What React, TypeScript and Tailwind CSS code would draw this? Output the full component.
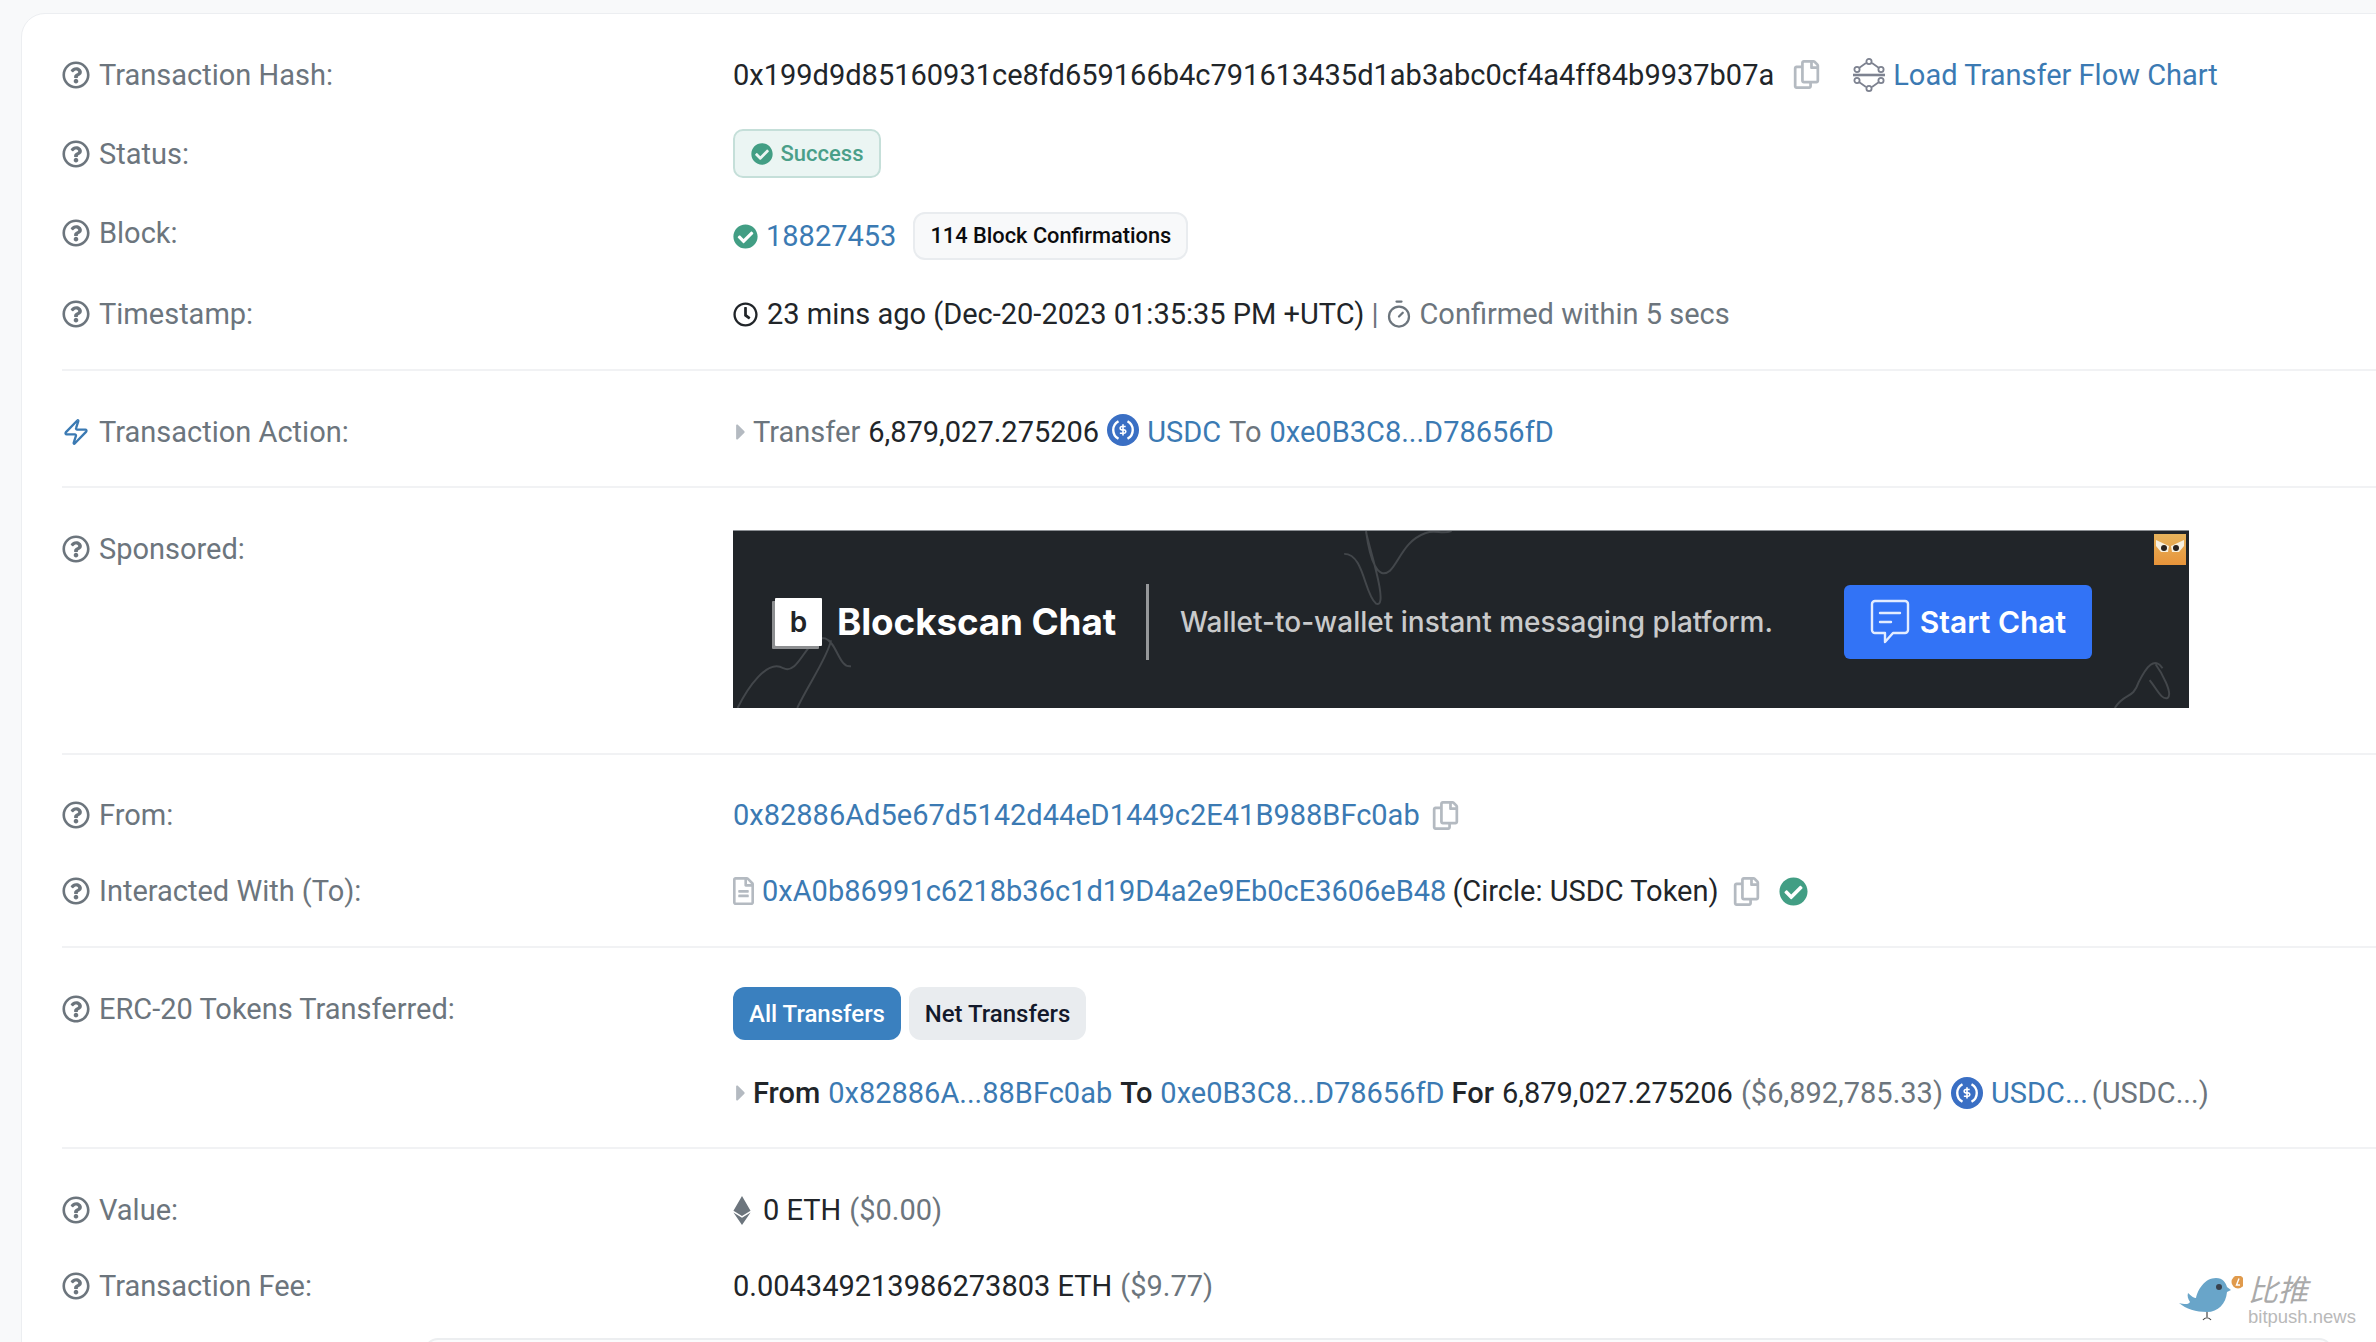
import type { ReactNode } from 'react';
import { FaCaretRight, FaCheckCircle, FaEthereum, FaRegClock, FaRegCopy, FaRegFileAlt, FaRegQuestionCircle } from 'react-icons/fa';
import { Timer, Zap } from 'lucide-react';

const Help = () => <FaRegQuestionCircle className="w-[28px] h-[28px] shrink-0 text-[#6c757d]" />;

const Copy = () => <FaRegCopy className="w-[29px] h-[29px] shrink-0 text-[#b4bac1]" />;

const A = ({ children }: { children: ReactNode }) => <span className="text-[#3b7ab3]">{children}</span>;

const Muted = ({ children }: { children: ReactNode }) => <span className="text-[#6c757d]">{children}</span>;

const Usdc = () => (
    <svg viewBox="0 0 32 32" className="w-[32px] h-[32px] shrink-0 -mt-[4px]">
        <circle cx="16" cy="16" r="16" fill="#3a6fc4" />
        <path d="M11.5 7.2a10 10 0 0 0 0 17.6M20.5 7.2a10 10 0 0 1 0 17.6" fill="none" stroke="#fff" strokeWidth="2.4" />
        <g transform="translate(10.6 10.2) scale(0.45)" fill="none" stroke="#fff" strokeWidth="3.6">
            <path d="M12 0v25" />
            <path d="M18 5H9.5a3.5 3.5 0 0 0 0 7.5h5a3.5 3.5 0 0 1 0 7.5H5" />
        </g>
    </svg>
);

const FlowIcon = () => (
    <svg viewBox="0 0 32 34" className="w-[32px] h-[34px] shrink-0" fill="none" stroke="#7d8290" strokeWidth="1.8">
        <path d="M6 10 13 5M19 5l7 5M6 24l7 5M19 29l7-5" />
        <path d="M0 17h32" strokeWidth="2.6" />
        <circle cx="16" cy="3.5" r="2.6" />
        <circle cx="4" cy="11.5" r="2.6" />
        <circle cx="28" cy="11.5" r="2.6" />
        <circle cx="4" cy="22.5" r="2.6" />
        <circle cx="28" cy="22.5" r="2.6" />
        <circle cx="16" cy="30.5" r="2.6" />
    </svg>
);

const Bird = () => (
    <svg viewBox="0 0 64 46" className="w-[64px] h-[46px]">
        <path d="M0 27c7 2 10 1 11-1-2-3-3-6-2-9 3 3 6 5 8 5 2-9 9-20 20-20 7 0 10 5 11 9l4 3-4 2c-1 12-9 20-20 20C17 36 7 33 0 27z" fill="#69a5c9" />
        <path d="M28 36v5M24 44c2-3 6-3 8 0" fill="none" stroke="#444" strokeWidth="1.2" />
        <circle cx="40" cy="11" r="3" fill="#39424e" />
        <circle cx="59" cy="6" r="6.5" fill="#e09a4c" />
        <path d="M60 2.5 57.5 9H61" fill="none" stroke="#fff" strokeWidth="1.4" />
    </svg>
);

const Banner = () => (
    <div className="relative w-[1456px] h-[178px] pt-[5px] flex items-center overflow-hidden bg-[#212529] border-t border-[#8b8f93] font-['Inter',sans-serif]">
        {/* background scribbles */}
        <svg viewBox="0 0 1455 178" className="absolute inset-0 w-full h-full" fill="none" stroke="#43474b" strokeWidth="2">
            <path d="M610 23c20 0 20 40 32 50 14 6-8-60-10-72M632 0c4 30 12 50 24 40 10-10 14-30 36-38 10-4 16 2 26-2" />
            <path d="M0 178c10-20 30-50 46-40 16 8 24-34 42-30 12 4 14 30 26 28M60 178c10-22 30-50 34-68" />
            <path d="M1385 178c10-16 18-8 24-26 8-16 16-26 24-14M1420 150c8 10 12 20 18 18 6-4-6-26-12-34" />
        </svg>

        <div className="relative ml-[42px] w-[47px] h-[48px] bg-white flex items-center justify-center rounded-[1px] shadow-[-3px_3px_0_#8d8f91]">
            <span className="text-[#212529] text-[28px] font-semibold leading-none">b</span>
        </div>
        <span className="relative ml-[15px] w-[309px] text-white text-[36.8px] font-bold leading-none tracking-[-0.1px]">Blockscan Chat</span>
        <div className="relative w-[3px] h-[76px] bg-[#96989a]" />
        <span className="relative ml-[31px] w-[664px] text-[#c9cacb] text-[28px] font-medium leading-none">Wallet-to-wallet instant messaging platform.</span>
        <button className="relative w-[248px] h-[74px] flex items-center justify-center gap-[10px] rounded-[6px] bg-[#3273f6] text-white text-[30px] font-semibold">
            <svg viewBox="0 0 40 48" className="w-[40px] h-[48px]" fill="none" stroke="#e3ecff" strokeWidth="2.4" strokeLinejoin="round">
                <path d="M5 3h30a3 3 0 0 1 3 3v26a3 3 0 0 1-3 3H23l-8 9v-9H5a3 3 0 0 1-3-3V6a3 3 0 0 1 3-3z" />
                <path d="M10 15h20M10 24h11" strokeLinecap="round" />
            </svg>
            Start Chat
        </button>
        {/* ad badge */}
        <div className="absolute top-[3px] right-[3px] w-[32px] h-[31px] bg-[linear-gradient(#e6b35c,#e8943a)] flex items-start justify-center pt-[6px]">
            <svg viewBox="0 0 28 14" className="w-[28px] h-[14px]">
                <path d="M0 0 13 6 12 12 5 12 0 6zM28 0 15 6 16 12 23 12 28 6z" fill="#f7f0df" />
                <circle cx="8" cy="8" r="3" fill="#2a2320" />
                <circle cx="20" cy="8" r="3" fill="#2a2320" />
            </svg>
        </div>
    </div>
);

const Row = ({ label, icon, height, children }: { label: string; icon?: ReactNode; height: string; children: ReactNode }) => (
    <div className={`flex items-center ${height}`}>
        <div className="w-[671px] shrink-0 flex items-center gap-[9px] text-[#6c757d]">
            {icon ?? <Help />}
            <span>{label}</span>
        </div>
        <div className="flex items-center">{children}</div>
    </div>
);

const TopRow = ({ label, className, children }: { label: string; className: string; children: ReactNode }) => (
    <div className={`flex items-start ${className}`}>
        <div className={`w-[671px] shrink-0 flex items-center gap-[9px] text-[#6c757d] ${label === 'Sponsored:' ? 'h-[38px]' : 'h-[44px]'}`}>
            <Help />
            <span>{label}</span>
        </div>
        <div>{children}</div>
    </div>
);

const Hr = () => <div className="h-[2px] bg-[#f1f2f4]" />;

export default function App() {
    return (
        <div className="relative h-[1342px] w-[2376px] overflow-hidden bg-[#f8f9fa] pt-[13px] pl-[21px] font-['Roboto',sans-serif] text-[29px] leading-[40px] text-[#212529]">
            <div className="w-[2400px] h-[1400px] rounded-tl-[24px] border border-[#eceef1] bg-white pl-[40px] pt-[21px]">
                {/* Hash, status, block, timestamp */}
                <Row label="Transaction Hash:" height="h-[79px]">
                    <span>0x199d9d85160931ce8fd659166b4c791613435d1ab3abc0cf4a4ff84b9937b07a</span>
                    <span className="ml-[18px]"><Copy /></span>
                    <span className="ml-[32px] mr-[8px]"><FlowIcon /></span>
                    <A>Load Transfer Flow Chart</A>
                </Row>
                <Row label="Status:" height="h-[79px]">
                    <div className="h-[49px] w-[148px] flex items-center justify-center gap-[8px] rounded-[10px] border-2 border-[#c5dfd9] bg-[#ebf5f3] text-[22px] font-medium text-[#4a9f89]">
                        <FaCheckCircle className="w-[22px] h-[22px] text-[#429e84]" />
                        Success
                    </div>
                </Row>
                <Row label="Block:" height="h-[80px]">
                    <div className="flex items-center mt-[6px]">
                        <FaCheckCircle className="w-[25px] h-[25px] text-[#429e84] mr-[8px]" />
                        <A>18827453</A>
                        <div className="ml-[17px] h-[48px] w-[275px] flex items-center justify-center rounded-[12px] border-2 border-[#e9ecef] bg-[#f8f9fa] text-[21.8px] font-medium text-[#0b0c0e]">
                            114 Block Confirmations
                        </div>
                    </div>
                </Row>
                <Row label="Timestamp:" height="h-[82px]">
                    <FaRegClock className="w-[25px] h-[25px] mr-[9px]" />
                    <span>23 mins ago (Dec-20-2023 01:35:35 PM +UTC)</span>
                    <span className="ml-[7px] text-[#6c757d]">|</span>
                    <Timer className="ml-[6px] mr-[5px] w-[30px] h-[30px] text-[#6c757d]" strokeWidth={1.8} />
                    <Muted>Confirmed within 5 secs</Muted>
                </Row>
                <div className="h-[14px]" />
                <Hr />

                {/* Action */}
                <div className="h-[21px]" />
                <Row label="Transaction Action:" icon={<Zap className="w-[28px] h-[28px] shrink-0 text-[#3b7ab3]" strokeWidth={2} />} height="h-[80px]">
                    <FaCaretRight className="w-[18px] h-[26px] mr-[3px] -ml-[1px] text-[#b4bac1]" />
                    <Muted>Transfer</Muted>
                    <span className="ml-[8px]">6,879,027.275206</span>
                    <span className="mx-[8px]"><Usdc /></span>
                    <A>USDC</A>
                    <span className="ml-[8px] text-[#6c757d]">To</span>
                    <span className="ml-[8px]"><A>0xe0B3C8...D78656fD</A></span>
                </Row>
                <div className="h-[14px]" />
                <Hr />

                {/* Sponsored */}
                <TopRow label="Sponsored:" className="pt-[42px] h-[265px]">
                    <Banner />
                </TopRow>
                <Hr />

                {/* From, To */}
                <div className="h-[22px]" />
                <Row label="From:" height="h-[76px]">
                    <A>0x82886Ad5e67d5142d44eD1449c2E41B988BFc0ab</A>
                    <span className="ml-[11px]"><Copy /></span>
                </Row>
                <Row label="Interacted With (To):" height="h-[76px]">
                    <FaRegFileAlt className="w-[21px] h-[28px] mr-[8px] text-[#b4bac1]" />
                    <A>0xA0b86991c6218b36c1d19D4a2e9Eb0cE3606eB48</A>
                    <span className="ml-[6px]">(Circle: USDC Token)</span>
                    <span className="ml-[13px]"><Copy /></span>
                    <FaCheckCircle className="ml-[18px] w-[29px] h-[29px] text-[#429e84]" />
                </Row>
                <div className="h-[17px]" />
                <Hr />

                {/* Token transfers */}
                <TopRow label="ERC-20 Tokens Transferred:" className="pt-[39px] h-[199px]">
                    <div className="flex gap-[8px] text-[24px] font-medium">
                        <button className="h-[53px] w-[168px] rounded-[12px] bg-[#3a80bf] text-white">All Transfers</button>
                        <button className="h-[53px] w-[177px] rounded-[12px] bg-[#e9ecef] text-[#13192b]">Net Transfers</button>
                    </div>
                    <div className="mt-[33px] flex items-center h-[40px]">
                        <FaCaretRight className="w-[18px] h-[26px] mr-[3px] -ml-[1px] text-[#b4bac1]" />
                        <span className="font-medium">From</span>
                        <span className="ml-[8px]"><A>0x82886A...88BFc0ab</A></span>
                        <span className="ml-[8px] font-medium">To</span>
                        <span className="ml-[8px]"><A>0xe0B3C8...D78656fD</A></span>
                        <span className="ml-[7px] font-medium">For</span>
                        <span className="ml-[8px]">6,879,027.275206</span>
                        <span className="ml-[8px]"><Muted>($6,892,785.33)</Muted></span>
                        <span className="mx-[8px] mt-[4px]"><Usdc /></span>
                        <A>USDC...</A>
                        <span className="ml-[4px]"><Muted>(USDC...)</Muted></span>
                    </div>
                </TopRow>
                <Hr />

                {/* Value, fee */}
                <div className="h-[23px]" />
                <Row label="Value:" height="h-[76px]">
                    <FaEthereum className="w-[18px] h-[29px] mr-[12px] text-[#6c757d]" />
                    <span>0 ETH</span>
                    <span className="ml-[8px]"><Muted>($0.00)</Muted></span>
                </Row>
                <Row label="Transaction Fee:" height="h-[76px]">
                    <span>0.004349213986273803 ETH</span>
                    <span className="ml-[8px]"><Muted>($9.77)</Muted></span>
                </Row>
            </div>

            {/* panel peeking in from the bottom edge */}
            <div className="absolute left-[424px] top-[1338px] w-[1909px] h-[20px] rounded-t-[14px] border-2 border-[#eceef0] bg-[#fbfbfc]" />

            {/* watermark */}
            <div className="absolute left-[2179px] top-[1276px]"><Bird /></div>
            <div className="absolute left-[2248px] top-[1273px] text-[30px] leading-[30px] italic text-[#aaaaaa] font-['Noto_Sans_CJK_SC',sans-serif]">比推</div>
            <div className="absolute left-[2248px] top-[1306px] text-[18.5px] leading-[22px] text-[#b9b9b9] font-['Liberation_Sans',sans-serif]">bitpush.news</div>
        </div>
    );
}
